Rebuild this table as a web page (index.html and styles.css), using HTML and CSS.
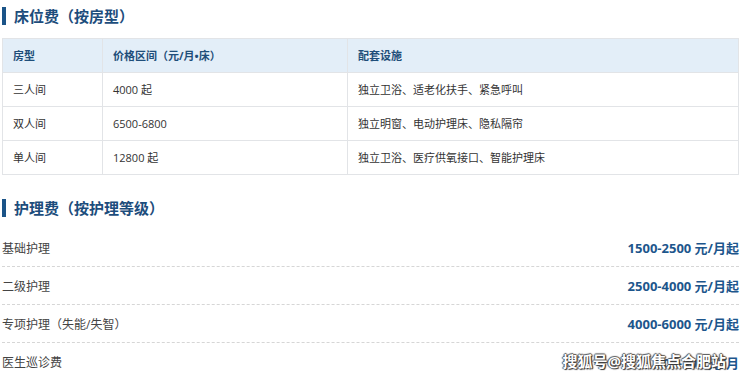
FILE: index.html
```html
<!DOCTYPE html>
<html lang="zh-CN">
<head>
<meta charset="utf-8">
<link rel="stylesheet" href="styles.css">
</head>
<body>
<div class="page">
  <h2 class="sec-title">床位费（按房型）</h2>
  <table class="room-table">
    <thead>
      <tr><th class="c1">房型</th><th class="c2">价格区间（元/月•床）</th><th class="c3">配套设施</th></tr>
    </thead>
    <tbody>
      <tr><td>三人间</td><td>4000 起</td><td>独立卫浴、适老化扶手、紧急呼叫</td></tr>
      <tr><td>双人间</td><td>6500-6800</td><td>独立明窗、电动护理床、隐私隔帘</td></tr>
      <tr><td>单人间</td><td>12800 起</td><td>独立卫浴、医疗供氧接口、智能护理床</td></tr>
    </tbody>
  </table>

  <h2 class="sec-title sec-title--second">护理费（按护理等级）</h2>
  <ul class="fee-list">
    <li class="fee-row"><span class="fee-name">基础护理</span><span class="fee-price">1500-2500 元/月起</span></li>
    <li class="fee-row"><span class="fee-name">二级护理</span><span class="fee-price">2500-4000 元/月起</span></li>
    <li class="fee-row"><span class="fee-name">专项护理（失能/失智）</span><span class="fee-price">4000-6000 元/月起</span></li>
    <li class="fee-row"><span class="fee-name">医生巡诊费</span><span class="fee-price">200-300 元/月</span></li>
  </ul>
  <div class="watermark">搜狐号@搜狐焦点合肥站</div>
</div>
</body>
</html>
```

FILE: styles.css
```css
* { box-sizing: border-box; }
html, body { margin: 0; padding: 0; background: #fff; }
body {
  font-family: "Open Sans", "Noto Sans CJK SC", sans-serif;
  color: #333;
  width: 740px;
  height: 380px;
  overflow: hidden;
}
.page {
  position: relative;
  padding: 0 1px 0 2px;
  height: 380px;
}
.sec-title {
  margin: 7px 0 0 0;
  border-left: 4px solid #1b5488;
  padding-left: 8px;
  font-size: 15px;
  line-height: 18px;
  font-weight: 700;
  color: #1d4d7c;
}
.sec-title--second {
  margin-top: 24px;
}
.room-table {
  margin-top: 13px;
  width: 100%;
  border-collapse: collapse;
  font-size: 11px;
}
.room-table th,
.room-table td {
  border: 1px solid #e2e4e7;
  padding: 10px 10px;
  line-height: 13px;
  text-align: left;
  vertical-align: middle;
}
.room-table th {
  background: #e3eef8;
  color: #1f4e7a;
  font-weight: 700;
}
.room-table td { color: #333; }
.room-table .c1 { width: 100px; }
.room-table .c2 { width: 245px; }
.fee-list {
  list-style: none;
  margin: 12px 0 0 0;
  padding: 0;
}
.fee-row {
  display: flex;
  justify-content: space-between;
  align-items: center;
  height: 38px;
  border-bottom: 1px dashed #d6d6d6;
}
.fee-row:last-child { border-bottom: none; }
.fee-name {
  font-size: 12px;
  color: #444;
}
.fee-price {
  font-size: 13px;
  font-weight: 700;
  color: #1d568c;
}
.watermark {
  position: absolute;
  right: 14px;
  top: 344px;
  font-size: 15px;
  line-height: 20px;
  font-weight: 700;
  color: #fff;
  text-shadow: 1px 1px 1px #333, -1px 0 1px #555, 0 -1px 1px #555, 1px 0 1px #555;
}
```
